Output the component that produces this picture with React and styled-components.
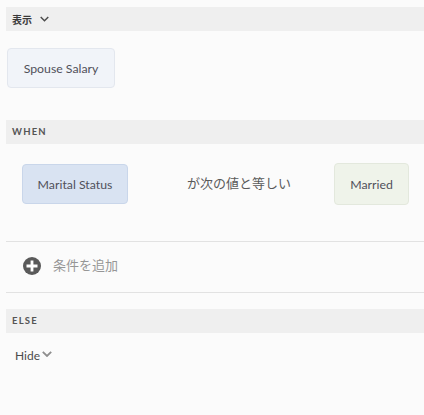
import React from "react";
import styled, { createGlobalStyle } from "styled-components";

const GlobalStyle = createGlobalStyle`
  html, body {
    margin: 0;
    padding: 0;
    background: #fbfbfb;
  }
  body {
    font-family: "Lato", "Noto Sans CJK JP", sans-serif;
    overflow: hidden;
  }
`;

const Chevron = ({ color = "#4b4b4b", width = 9, weight = 1.6 }) => (
  <svg width={width} height="6" viewBox="0 0 10 6" fill="none">
    <path d="M0.8 0.8 L5 5 L9.2 0.8" stroke={color} strokeWidth={weight} />
  </svg>
);

const App = () => {
  return (
    <>
      <GlobalStyle />
      <Page>
        <DisplayBar>
          <span>表示</span>
          <Chevron />
        </DisplayBar>
        <TargetRow>
          <Chip $bg="#f1f4f9" $border="#e3e7ee" $w={108} $h={40}>
            Spouse Salary
          </Chip>
        </TargetRow>

        <SectionBar>WHEN</SectionBar>
        <ConditionRow>
          <Chip $bg="#d9e3f2" $border="#c9d6ea" $w={106} $h={40}>
            Marital Status
          </Chip>
          <Operator>が次の値と等しい</Operator>
          <Chip $bg="#eff3ea" $border="#e3e8dd" $w={75} $h={42}>
            Married
          </Chip>
        </ConditionRow>

        <AddRow>
          <svg width="18" height="18" viewBox="0 0 18 18">
            <circle cx="9" cy="9" r="9" fill="#5a5a5a" />
            <path d="M9 3.5 V14.5 M3.5 9 H14.5" stroke="#fff" strokeWidth="2.8" />
          </svg>
          <AddLabel>条件を追加</AddLabel>
        </AddRow>

        <SectionBar>ELSE</SectionBar>
        <ElseRow>
          <span>Hide</span>
          <HideChevron>
            <Chevron color="#8e8e8e" width={10} weight={1.8} />
          </HideChevron>
        </ElseRow>
      </Page>
    </>
  );
};

const Page = styled.div`
  width: 424px;
  height: 415px;
  padding-top: 7px;
  box-sizing: border-box;
  background: #fbfbfb;
`;

const DisplayBar = styled.div`
  margin-left: 6px;
  height: 24px;
  padding-left: 6px;
  display: flex;
  align-items: center;
  gap: 8px;
  background: #efefef;
  color: #3a3a3a;
  font-size: 10px;
  font-weight: 700;
`;

const TargetRow = styled.div`
  padding: 17px 0 32px 7px;
  display: flex;
`;

const Chip = styled.div`
  width: ${({ $w }) => $w}px;
  height: ${({ $h }) => $h}px;
  box-sizing: border-box;
  display: flex;
  align-items: center;
  justify-content: center;
  background: ${({ $bg }) => $bg};
  border: 1px solid ${({ $border }) => $border};
  border-radius: 4px;
  color: #50505a;
  font-size: 12.3px;
  white-space: nowrap;
`;

const SectionBar = styled.div`
  margin-left: 6px;
  height: 24px;
  padding: 0 0 1px 6px;
  box-sizing: border-box;
  display: flex;
  align-items: center;
  background: #efefef;
  color: #555;
  font-size: 9.5px;
  font-weight: 700;
  letter-spacing: 1.2px;
`;

const ConditionRow = styled.div`
  margin-left: 6px;
  height: 98px;
  padding: 19px 15px 36px 16px;
  box-sizing: border-box;
  display: flex;
  align-items: center;
  border-bottom: 1px solid #e2e2e2;
`;

const Operator = styled.div`
  flex: 1;
  padding: 0 0 4px 59px;
  color: #5a5a5a;
  font-size: 13px;
`;

const AddRow = styled.div`
  margin: 0 0 16px 6px;
  height: 51px;
  padding: 0 0 2px 17px;
  box-sizing: border-box;
  display: flex;
  align-items: center;
  gap: 12px;
  border-bottom: 1px solid #e2e2e2;
`;

const AddLabel = styled.span`
  padding-bottom: 3px;
  color: #969696;
  font-size: 13px;
`;

const ElseRow = styled.div`
  padding: 14px 0 0 15px;
  display: flex;
  align-items: center;
  gap: 2px;
  color: #4b4b4b;
  font-size: 12px;
  line-height: 18px;
`;

const HideChevron = styled.span`
  display: flex;
  margin-bottom: 5px;
`;

export default App;
